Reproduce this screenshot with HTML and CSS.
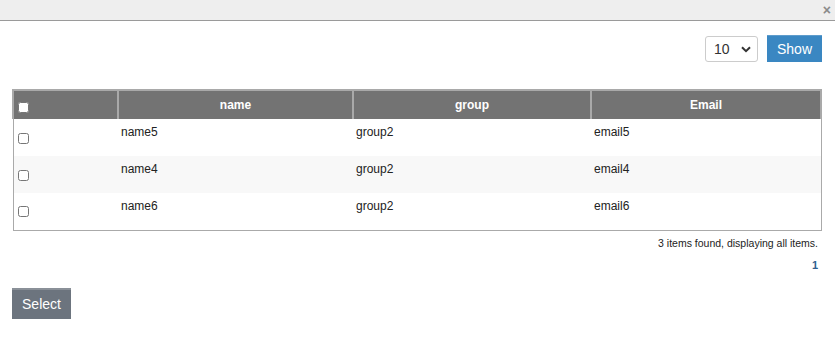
FILE: index.html
```html
<!DOCTYPE html>
<html>
<head>
<meta charset="utf-8">
<link rel="stylesheet" href="styles.css">
</head>
<body>
<div class="titlebar"><span class="close">×</span></div>
<div class="content">
  <div class="controls">
    <span class="select-wrap">
      <select class="pagesize">
        <option>10</option>
      </select>
      <svg class="chev" width="10" height="7" viewBox="0 0 10 7"><path d="M1 1.2 L5 5.2 L9 1.2" fill="none" stroke="#333" stroke-width="2"/></svg>
    </span>
    <button class="btn-show">Show</button>
  </div>
  <table class="grid">
    <colgroup>
      <col class="c1"><col class="c2"><col class="c3"><col class="c4">
    </colgroup>
    <thead>
      <tr>
        <th class="col-check"><input type="checkbox" class="hcheck"></th>
        <th>name</th>
        <th>group</th>
        <th>Email</th>
      </tr>
    </thead>
    <tbody>
      <tr>
        <td class="cell-check"><input type="checkbox"></td>
        <td>name5</td>
        <td>group2</td>
        <td>email5</td>
      </tr>
      <tr class="alt">
        <td class="cell-check"><input type="checkbox"></td>
        <td>name4</td>
        <td>group2</td>
        <td>email4</td>
      </tr>
      <tr>
        <td class="cell-check"><input type="checkbox"></td>
        <td>name6</td>
        <td>group2</td>
        <td>email6</td>
      </tr>
    </tbody>
  </table>
  <div class="summary">3 items found, displaying all items.</div>
  <div class="pager"><span class="page">1</span></div>
  <button class="btn-select">Select</button>
</div>
</body>
</html>
```

FILE: styles.css
```css
html, body {
  margin: 0;
  padding: 0;
  background: #fff;
  font-family: "Liberation Sans", Arial, sans-serif;
  font-size: 12px;
  color: #222;
}
.titlebar {
  height: 20px;
  background: #eeeeee;
  border-bottom: 1px solid #9a9a9a;
  display: flex;
  justify-content: flex-end;
  align-items: center;
}
.close {
  font-size: 14px;
  font-weight: bold;
  color: #8a8a8a;
  margin-right: 4px;
  line-height: 1;
}
.content {
  padding: 0 13px 0 12px;
}
.controls {
  display: flex;
  justify-content: flex-end;
  align-items: center;
  gap: 9px;
  margin-top: 14px;
}
.select-wrap {
  position: relative;
  display: inline-block;
  height: 26px;
}
.pagesize {
  appearance: none;
  -webkit-appearance: none;
  width: 53px;
  height: 26px;
  border: 1px solid #ccc;
  border-radius: 3px;
  background: #fff;
  font-family: "Liberation Sans", Arial, sans-serif;
  font-size: 14px;
  color: #333;
  padding: 0 0 0 8px;
  display: block;
}
.chev {
  position: absolute;
  right: 7px;
  top: 10px;
  pointer-events: none;
}
.btn-show {
  width: 55px;
  height: 27px;
  background: #3a87c2;
  border: none;
  border-top: 1px solid #5e9ccc;
  color: #fff;
  font-family: "Liberation Sans", Arial, sans-serif;
  font-size: 14px;
  padding: 0;
}
.grid {
  width: 810px;
  margin-top: 27px;
  border-collapse: collapse;
  border: 1px solid #aaa;
  table-layout: fixed;
}
.c1 { width: 105px; }
.c2 { width: 235px; }
.c3 { width: 238px; }
.c4 { width: auto; }
.grid th {
  background: #737373;
  color: #fff;
  font-weight: bold;
  font-size: 12px;
  height: 28px;
  border: 2px solid #a9a9a9;
  border-bottom: none;
  text-align: center;
  padding: 0;
}
.grid th.col-check {
  text-align: left;
  padding-left: 4px;
}
.hcheck {
  margin: 0;
  width: 11px;
  height: 11px;
  vertical-align: middle;
  position: relative;
  top: 2px;
}
.grid td {
  height: 37px;
  padding: 6px 2px 0 3px;
  vertical-align: top;
  box-sizing: border-box;
  line-height: 14px;
}
.grid td.cell-check {
  padding: 0 0 0 3px;
  vertical-align: middle;
}
.grid td.cell-check input {
  margin: 4px 0 0 1px;
  width: 11px;
  height: 11px;
}
.grid tr.alt td {
  background: #f8f8f8;
}
.summary {
  text-align: right;
  font-size: 10.5px;
  margin-top: 6px;
  padding-right: 4px;
  color: #222;
}
.pager {
  text-align: right;
  margin-top: 9px;
  padding-right: 4px;
}
.page {
  font-size: 11px;
  font-weight: bold;
  color: #2f5f8f;
}
.btn-select {
  margin-top: 16px;
  width: 59px;
  height: 31px;
  background: #6c747e;
  border: none;
  border-top: 2px solid #8a9098;
  color: #fff;
  font-family: "Liberation Sans", Arial, sans-serif;
  font-size: 14px;
  padding: 0;
}
```
